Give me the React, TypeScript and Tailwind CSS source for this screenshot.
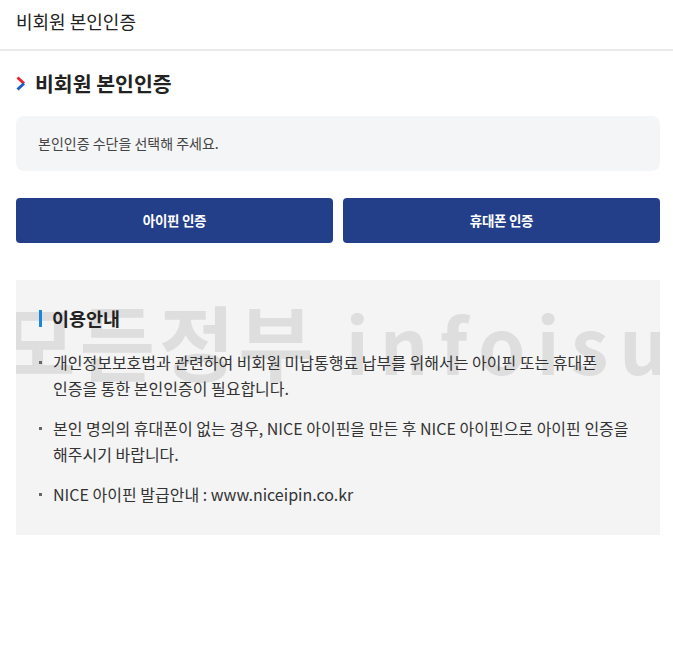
const FONT = "font-['Noto_Sans_CJK_KR','Noto_Sans',sans-serif]";

function Chevron() {
  return (
    <svg width="10" height="15" viewBox="0 0 10 15" className="shrink-0">
      <path d="M1.5 1.5 L8 7.5" stroke="#e3262e" strokeWidth="3" strokeLinecap="butt" fill="none" />
      <path d="M8 7.5 L1.5 13.5" stroke="#1c5cc7" strokeWidth="3" strokeLinecap="butt" fill="none" />
    </svg>
  );
}

function Bullet({ children }: { children: React.ReactNode }) {
  return (
    <li className="flex">
      <span className="w-[14px] shrink-0 pt-[12px]">
        <span className="block h-[3px] w-[3px] bg-[#666]" />
      </span>
      <span>{children}</span>
    </li>
  );
}

export default function App() {
  return (
    <div className={`min-h-screen bg-white ${FONT} text-[#222]`}>
      {/* top bar */}
      <header className="flex h-[51px] items-center border-b-2 border-[#ebebeb] px-[16px] pb-[6px]">
        <h1 className="text-[18px] text-[#222]">비회원 본인인증</h1>
      </header>

      <main className="pl-4 pr-[13px]">
        <div className="mt-[20px] flex h-[24px] items-center gap-[9px]">
          <Chevron />
          <h2 className="text-[20.5px] font-bold text-[#222]">비회원 본인인증</h2>
        </div>

        <div className="mt-[21px] flex h-[55px] items-center rounded-[8px] bg-[#f4f5f7] px-[22px]">
          <p className="text-[14px] text-[#444]">본인인증 수단을 선택해 주세요.</p>
        </div>

        <div className="mt-[27px] grid grid-cols-2 gap-[10px]">
          <button className="h-[45px] rounded-[4px] bg-[#243f8a] text-[13.5px] font-semibold tracking-[-0.3px] text-white">
            아이핀 인증
          </button>
          <button className="h-[45px] rounded-[4px] bg-[#243f8a] text-[13.5px] font-semibold tracking-[-0.3px] text-white">
            휴대폰 인증
          </button>
        </div>

        <section className="relative mt-[37px] h-[255px] overflow-hidden bg-[#f4f4f4] px-[23px] pt-[25px]">
          {/* watermark */}
          <div
            aria-hidden
            className="pointer-events-none absolute left-[-16px] top-[19px] whitespace-nowrap text-[82px] font-bold leading-none text-[#dedede] select-none"
          >
            <span className="tracking-[4px]">모든정부</span>
            <span className="ml-[28px] text-[76px] tracking-[11px]">infoisu</span>
          </div>

          <div className="relative">
            <div className="flex h-[27px] items-center gap-[10px]">
              <span className="h-[17px] w-[3px] bg-[#1a86e0]" />
              <h3 className="text-[18.5px] font-bold text-[#222]">이용안내</h3>
            </div>

            <ul className="mt-[17px] flex flex-col gap-[14px] text-[16px] leading-[26px] text-[#333]">
              <Bullet>
                개인정보보호법과 관련하여 비회원 미납통행료 납부를 위해서는 아이핀 또는 휴대폰
                <br />
                인증을 통한 본인인증이 필요합니다.
              </Bullet>
              <Bullet>
                본인 명의의 휴대폰이 없는 경우, NICE 아이핀을 만든 후 NICE 아이핀으로 아이핀 인증을
                <br />
                해주시기 바랍니다.
              </Bullet>
              <Bullet>NICE 아이핀 발급안내 : www.niceipin.co.kr</Bullet>
            </ul>
          </div>
        </section>
      </main>
    </div>
  );
}
